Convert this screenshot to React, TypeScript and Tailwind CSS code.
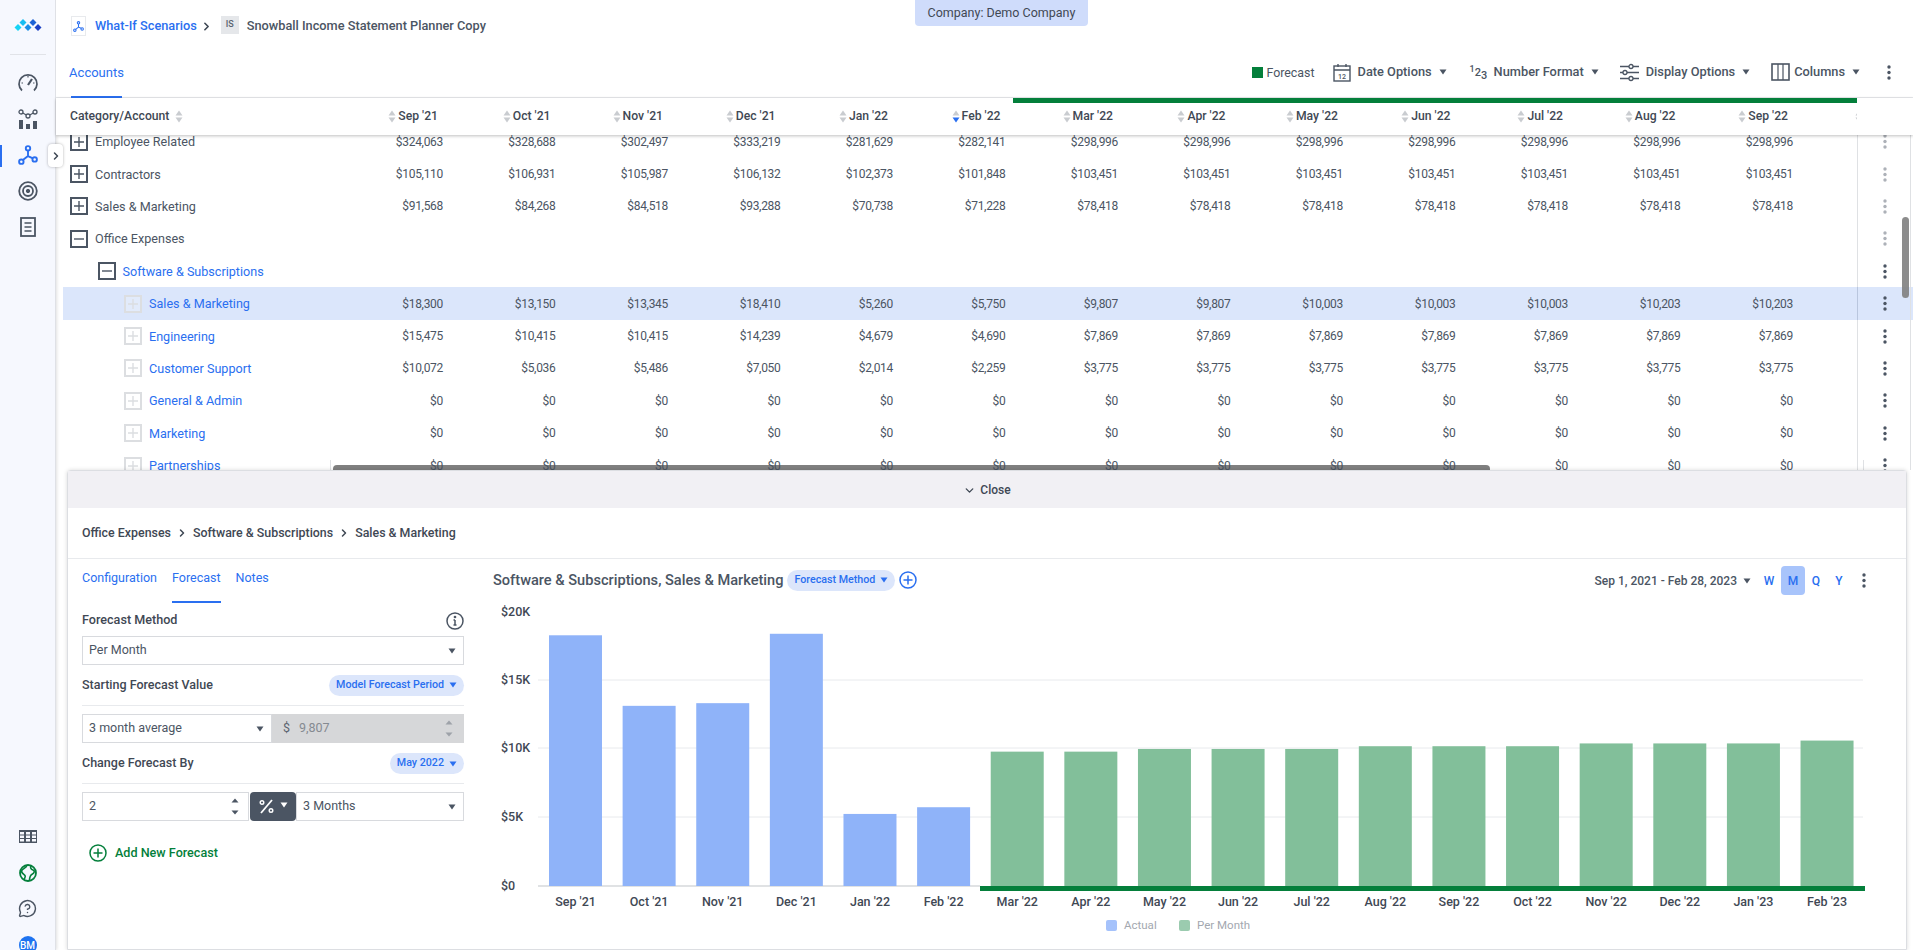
import { ChevronDown, ChevronRight, MessageCircleQuestion } from "lucide-react";

const MONTHS = ["Sep '21", "Oct '21", "Nov '21", "Dec '21", "Jan '22", "Feb '22", "Mar '22", "Apr '22", "May '22", "Jun '22", "Jul '22", "Aug '22", "Sep '22"];
const CHART_MONTHS = ["Sep '21", "Oct '21", "Nov '21", "Dec '21", "Jan '22", "Feb '22", "Mar '22", "Apr '22", "May '22", "Jun '22", "Jul '22", "Aug '22", "Sep '22", "Oct '22", "Nov '22", "Dec '22", "Jan '23", "Feb '23"];
const CHART_VALUES = [18300, 13150, 13345, 18410, 5260, 5750, 9807, 9807, 10003, 10003, 10003, 10203, 10203, 10203, 10407, 10407, 10407, 10615];

const flat = (v: number) => Array(7).fill(v);
const zero = Array(13).fill(0);

type Row = { name: string; level: number; box: "plus" | "minus" | "ghost"; link?: boolean; active?: boolean; faded?: boolean; values: number[] };

const ROWS: Row[] = [
  { name: "Employee Related", level: 0, box: "plus", faded: true, values: [324063, 328688, 302497, 333219, 281629, 282141, ...flat(298996)] },
  { name: "Contractors", level: 0, box: "plus", faded: true, values: [105110, 106931, 105987, 106132, 102373, 101848, ...flat(103451)] },
  { name: "Sales & Marketing", level: 0, box: "plus", faded: true, values: [91568, 84268, 84518, 93288, 70738, 71228, ...flat(78418)] },
  { name: "Office Expenses", level: 0, box: "minus", faded: true, values: [] },
  { name: "Software & Subscriptions", level: 1, box: "minus", link: true, values: [] },
  { name: "Sales & Marketing", level: 2, box: "ghost", link: true, active: true, values: [18300, 13150, 13345, 18410, 5260, 5750, 9807, 9807, 10003, 10003, 10003, 10203, 10203] },
  { name: "Engineering", level: 2, box: "ghost", link: true, values: [15475, 10415, 10415, 14239, 4679, 4690, ...flat(7869)] },
  { name: "Customer Support", level: 2, box: "ghost", link: true, values: [10072, 5036, 5486, 7050, 2014, 2259, ...flat(3775)] },
  { name: "General & Admin", level: 2, box: "ghost", link: true, values: zero },
  { name: "Marketing", level: 2, box: "ghost", link: true, values: zero },
  { name: "Partnerships", level: 2, box: "ghost", link: true, values: zero },
];

const money = (v: number) => "$" + v.toLocaleString("en-US");

function Caret({ className = "" }: { className?: string }) {
  return (
    <svg width="8" height="6" viewBox="0 0 8 6" className={className}>
      <path d="M0.5 0.5h7L4 5.5z" fill="currentColor" />
    </svg>
  );
}

function Spinner() {
  return (
    <svg width="8" height="17" viewBox="0 0 8 17" className="text-[#4b5563]">
      <path d="M0.5 4.5h7L4 0.5zM0.5 12.5h7L4 16.5z" fill="currentColor" />
    </svg>
  );
}

function SortIcon({ active }: { active?: boolean }) {
  return (
    <svg width="8" height="13" viewBox="0 0 8 13" className="shrink-0">
      <path d="M0.5 5.5h7L4 0.5z" fill="#c9ccd0" />
      <path d="M0.5 7.5h7L4 12.5z" fill={active ? "#2a6ff0" : "#c9ccd0"} />
    </svg>
  );
}

function Dots({ className = "" }: { className?: string }) {
  return (
    <svg width="4" height="15" viewBox="0 0 4 15" className={className}>
      <circle cx="2" cy="2" r="1.7" fill="currentColor" />
      <circle cx="2" cy="7.5" r="1.7" fill="currentColor" />
      <circle cx="2" cy="13" r="1.7" fill="currentColor" />
    </svg>
  );
}

function TreeBox({ kind }: { kind: Row["box"] }) {
  const ghost = kind === "ghost";
  const border = ghost ? "border-[#dcdee1]" : "border-[#4b5563]";
  const stroke = ghost ? "#dcdee1" : "#4b5563";
  return (
    <span className={`flex h-[18px] w-[18px] shrink-0 items-center justify-center border-2 bg-white/20 ${border}`}>
      <svg width="10" height="10" viewBox="0 0 10 10">
        <path d={kind === "minus" ? "M0 5h10" : "M0 5h10M5 0v10"} stroke={stroke} strokeWidth="1.4" />
      </svg>
    </span>
  );
}

function ScenarioIcon({ size = 18, color = "#2a6ff0" }: { size?: number; color?: string }) {
  return (
    <svg width={size} height={size} viewBox="0 0 18 18" fill="none" stroke={color} strokeWidth="1.7">
      <circle cx="9" cy="3" r="2" />
      <circle cx="3" cy="15" r="2" />
      <circle cx="15" cy="13" r="2" />
      <path d="M9 5v5l-4.6 3.6M9 10l4.4 2" />
    </svg>
  );
}

function Sidebar() {
  return (
    <aside className="relative flex w-[56px] shrink-0 flex-col items-center border-r border-[#dfe1e6] bg-[#f6f8fe] shadow-[1px_0_3px_rgba(0,0,0,0.12)]">
      <svg width="28" height="14" viewBox="0 0 28 14" className="mt-[19px]">
        <path d="M4 5l3.5 3.5L4 12 .5 8.5z" fill="#16d3f5" />
        <path d="M9 0l3.5 3.5L9 7 5.5 3.5z" fill="#17bdf2" />
        <path d="M14 5l3.5 3.5L14 12l-3.5-3.5z" fill="#1a8de6" />
        <path d="M19 0l3.5 3.5L19 7l-3.5-3.5z" fill="#1c63d6" />
        <path d="M24 5l3.5 3.5L24 12l-3.5-3.5z" fill="#1b40c4" />
      </svg>
      <div className="mt-[21px] h-px w-[36px] bg-[#e1e3e8]" />
      <div className="mt-[18px] flex flex-col items-center gap-[16px]">
        <svg width="20" height="20" viewBox="0 0 20 20" fill="none" stroke="#4b5563" strokeWidth="1.7">
          <path d="M4 17.5A9 9 0 1 1 16 17.5" />
          <path d="M10 12l4-6" strokeWidth="2.2" />
          <path d="M10 3v1.5M3.5 10H5M16.5 10H15" strokeWidth="1.2" />
        </svg>
        <svg width="20" height="20" viewBox="0 0 20 20" fill="none" stroke="#4b5563" strokeWidth="1.3">
          <circle cx="3" cy="3" r="2" />
          <circle cx="10" cy="7" r="2" />
          <circle cx="17" cy="3" r="2" />
          <path d="M4.8 4l3.5 2M11.8 6l3.5-2" />
          <path d="M1 11h4v9H1zM8 15h4v5H8zM15 12h4v8h-4z" fill="#4b5563" stroke="none" />
        </svg>
        <ScenarioIcon size={20} />
        <svg width="20" height="20" viewBox="0 0 20 20" fill="none" stroke="#4b5563">
          <circle cx="10" cy="10" r="8.8" strokeWidth="1.8" />
          <circle cx="10" cy="10" r="5" strokeWidth="1.8" />
          <circle cx="10" cy="10" r="1.7" fill="#4b5563" />
        </svg>
        <svg width="16" height="20" viewBox="0 0 16 20" fill="none" stroke="#4b5563" strokeWidth="1.6">
          <rect x="1" y="1" width="14" height="18" strokeWidth="1.8" />
          <path d="M4.5 6h7M4.5 10h7M4.5 14h7" />
        </svg>
      </div>
      <div className="absolute left-0 top-[145px] h-[22px] w-[2px] bg-[#2a6ff0]" />
      <button className="absolute left-[48px] top-[144px] z-30 flex h-[23px] w-[15px] items-center justify-center rounded-sm bg-white shadow-[0_0_3px_rgba(0,0,0,0.3)]">
        <ChevronRight size={12} strokeWidth={3} className="text-[#3f4854]" />
      </button>
      <div className="mt-auto -mb-[4px] flex flex-col items-center gap-[17px]">
        <svg width="18" height="13" viewBox="0 0 18 13" className="mb-[4px]">
          <rect width="18" height="13" fill="#4b5563" />
          <path d="M1 2h4v2.5H1zM7 2h4v2.5H7zM13 2h4v2.5h-4zM1 5.5h4V8H1zM7 5.5h4V8H7zM13 5.5h4V8h-4zM1 9h4v2.5H1zM7 9h4v2.5H7zM13 9h4v2.5h-4z" fill="#f6f8fe" />
        </svg>
        <svg width="18" height="18" viewBox="0 0 18 18" fill="none" stroke="#047f3b" strokeWidth="1.6">
          <circle cx="9" cy="9" r="8" strokeWidth="1.8" />
          <path d="M8 1.2c-.5 3-4 3-5.2 5.3S5 10 6 11.5s-.8 3-1 4.500" />
          <path d="M12 1.800c-1 2 0 3.500 2 4.200s1.500 3-.5 4-3 3-3 6.500" />
        </svg>
        <MessageCircleQuestion size={19} strokeWidth={1.8} className="mb-px text-[#4b5563]" />
        <div className="flex h-[18px] w-[18px] items-center justify-center rounded-full bg-[#1e73f0] text-[10px] font-medium text-white">BM</div>
      </div>
    </aside>
  );
}

function TopBar() {
  return (
    <div className="relative h-[98px] shrink-0 border-b border-[#e8eaed] bg-white">
      <div className="absolute left-[859px] top-0 flex h-[26px] w-[173px] items-center justify-center rounded-b-sm bg-[#cfdcfb] text-[12.5px] text-[#3f4854]">Company: Demo Company</div>
      <div className="flex h-[54px] items-start pl-[15px] pt-[16px]">
        <span className="flex h-[20px] w-[15px] items-center justify-center border border-[#e8eaed] bg-white">
          <ScenarioIcon size={11} />
        </span>
        <span className="ml-[9px] text-[12.75px] font-medium leading-[20px] text-[#2a6ff0]">What-If Scenarios</span>
        <ChevronRight size={13} strokeWidth={3} className="ml-[3px] mt-[4px] text-[#3f4854]" />
        <span className="ml-[8px] flex h-[18px] w-[18px] items-center justify-center bg-[#e5e7ea] text-[9px] font-medium text-[#5b6470]">IS</span>
        <span className="ml-[8px] text-[12.75px] font-medium leading-[20px] text-[#4b5563]">Snowball Income Statement Planner Copy</span>
      </div>
      <div className="flex h-[44px] items-start justify-between pl-[15px]">
        <div className="flex h-[44px] w-[51px] items-start justify-center border-b-2 border-[#2a6ff0] pt-[9px] text-[13px] text-[#2a6ff0]">Accounts</div>
        <div className="flex h-[36px] items-center pr-[22px] text-[12.8px] font-medium text-[#4b5563]">
          <span className="h-[11px] w-[11px] bg-[#047f3b]" />
          <span className="ml-[3px] mt-[3px] text-[12.4px] font-normal">Forecast</span>
          <svg width="18" height="19" viewBox="0 0 18 19" fill="none" stroke="#4b5563" strokeWidth="1.4" className="ml-[18px]">
            <rect x="1" y="3" width="16" height="15" />
            <path d="M1 7h16M5 1v3M13 1v3" />
            <text x="9" y="15.5" fontSize="7" textAnchor="middle" fill="#4b5563" stroke="none">12</text>
          </svg>
          <span className="ml-[7px]">Date Options</span>
          <Caret className="ml-[7px]" />
          <span className="ml-[23px] flex w-[18px] items-center text-[11px] leading-none">
            <span className="-mt-[6px] text-[9px]">1</span>
            <span>2</span>
            <span className="mt-[6px]">3</span>
          </span>
          <span className="ml-[6px]">Number Format</span>
          <Caret className="ml-[7px]" />
          <svg width="19" height="19" viewBox="0 0 19 19" fill="none" stroke="#4b5563" strokeWidth="1.3" className="ml-[21px]">
            <path d="M0 3.5h9M13 3.5h6M0 9.5h3M7 9.5h12M0 15.5h9M13 15.5h6" />
            <circle cx="11" cy="3.5" r="2" />
            <circle cx="5" cy="9.5" r="2" />
            <circle cx="11" cy="15.5" r="2" />
          </svg>
          <span className="ml-[7px]">Display Options</span>
          <Caret className="ml-[7px]" />
          <svg width="19" height="18" viewBox="0 0 19 18" fill="none" stroke="#4b5563" strokeWidth="1.6" className="ml-[21px]">
            <rect x="1" y="1" width="17" height="16" />
            <path d="M7 1v16M12 1v16" strokeWidth="1.2" />
          </svg>
          <span className="ml-[4px]">Columns</span>
          <Caret className="ml-[7px]" />
          <Dots className="ml-[27px]" />
        </div>
      </div>
    </div>
  );
}

function TableHeader() {
  return (
    <div className="relative z-20 flex h-[37px] shrink-0 bg-white pl-[7px] shadow-[0_1px_3px_rgba(0,0,0,0.25)]">
      <div className="flex w-[267.5px] items-center gap-[6px] pl-[7px] text-[12.2px] font-medium text-[#3f4854]">
        Category/Account <SortIcon />
      </div>
      <div className="relative flex w-[1526.5px] shrink-0 overflow-hidden">
        <div className="absolute right-0 top-0 h-[5px] w-[844.5px] bg-[#047f3b]" />
        {MONTHS.map((m) => (
          <div key={m} className="flex w-[112.5px] shrink-0 items-center justify-end gap-[2px] pr-[5px] text-[12.2px] font-medium text-[#3f4854]">
            <SortIcon active={m === "Feb '22"} />
            {m}
          </div>
        ))}
        <div className="flex w-[64px] shrink-0 items-center pl-[62px]">
          <SortIcon />
        </div>
      </div>
    </div>
  );
}

function TableRow({ row }: { row: Row }) {
  const indent = row.level === 0 ? "pl-[7px]" : row.level === 1 ? "pl-[34.5px]" : "pl-[61px]";
  return (
    <div className="flex h-[32.4px] pl-[7px]">
      <div className={`flex min-w-0 flex-1 ${row.active ? "bg-[#dbe6fb]" : ""}`}>
        <div className={`flex w-[267.5px] shrink-0 items-center gap-[7px] ${indent}`}>
          <TreeBox kind={row.box} />
          <span className={`pt-[2px] text-[12.6px] ${row.link ? "text-[#2a6ff0]" : "text-[#4b5563]"}`}>{row.name}</span>
        </div>
        {MONTHS.map((m, i) => (
          <div key={m} className="flex w-[112.5px] shrink-0 items-center justify-end text-[12px] tracking-[-0.3px] text-[#4b5563]">
            {row.values[i] !== undefined ? money(row.values[i]) : ""}
          </div>
        ))}
        <div className="w-[64px] shrink-0" />
        <div className={`flex w-[53px] shrink-0 items-center border-l pl-[25px] ${row.active ? "border-[#b9c6de]" : "border-[#dfe1e4]"}`}>
          <Dots className={row.faded ? "text-[#adb1b8]" : "text-[#4b5563]"} />
        </div>
      </div>
    </div>
  );
}

function Pill({ label }: { label: string }) {
  return (
    <span className="flex h-[21px] items-center gap-[5px] rounded-full bg-[#dce6fb] px-[7px] text-[10.7px] font-medium text-[#2a6ff0]">
      {label}
      <Caret className="text-[#2a6ff0]" />
    </span>
  );
}

function SelectBox({ label, className }: { label: string; className: string }) {
  return (
    <div className={`flex h-[29px] items-center justify-between border border-[#d8dade] bg-white pl-[6px] pr-[7px] text-[12.5px] text-[#4b5563] ${className}`}>
      {label}
      <Caret className="text-[#4b5563]" />
    </div>
  );
}

function ForecastForm() {
  return (
    <div className="w-[412px] shrink-0 pl-[14px] pr-[16px]">
      <div className="flex h-[44px] gap-[15px] text-[12.5px] text-[#2a6ff0]">
        <span className="pt-[10px]">Configuration</span>
        <span className="border-b-2 border-[#2a6ff0] pt-[10px]">Forecast</span>
        <span className="pt-[10px]">Notes</span>
      </div>
      <div className="flex h-[33px] items-center justify-between pt-[2px]">
        <span className="text-[12.6px] font-medium text-[#3f4854]">Forecast Method</span>
        <svg width="18" height="18" viewBox="0 0 18 18" fill="none" stroke="#4b5563" strokeWidth="1.5">
          <circle cx="9" cy="9" r="8" />
          <path d="M9 8v5M7.5 13h3M7.5 8H9" />
          <circle cx="9" cy="5" r="0.6" />
        </svg>
      </div>
      <SelectBox label="Per Month" className="w-full" />
      <div className="flex h-[41px] items-center justify-between border-b border-[#e8eaed]">
        <span className="text-[12.5px] font-medium text-[#3f4854]">Starting Forecast Value</span>
        <Pill label="Model Forecast Period" />
      </div>
      <div className="mt-[8px] flex">
        <SelectBox label="3 month average" className="w-[190px]" />
        <div className="flex h-[29px] flex-1 items-center justify-between bg-[#d6d7d9] pl-[11px] pr-[11px] text-[12.5px] text-[#858a91]">
          <span className="flex gap-[9px]"><span className="text-[#5b6470]">$</span>9,807</span>
          <span className="opacity-40"><Spinner /></span>
        </div>
      </div>
      <div className="flex h-[41px] items-center justify-between border-b border-[#e8eaed] pt-px">
        <span className="text-[12.5px] font-medium text-[#3f4854]">Change Forecast By</span>
        <Pill label="May 2022" />
      </div>
      <div className="mt-[8px] flex">
        <div className="flex h-[29px] w-[167px] items-center justify-between border border-[#d8dade] pl-[6px] pr-[9px] text-[12.5px] text-[#4b5563]">
          2
          <Spinner />
        </div>
        <div className="ml-px flex h-[29px] w-[46px] items-center justify-center gap-[6px] rounded-sm bg-[#4b5563]">
          <svg width="15" height="15" viewBox="0 0 15 15" fill="none" stroke="white" strokeWidth="1.4">
            <path d="M13 1L2 14" strokeWidth="1.8" />
            <circle cx="3" cy="3.5" r="1.8" />
            <circle cx="12" cy="11.5" r="1.8" />
          </svg>
          <Caret className="-mt-[3px] text-white" />
        </div>
        <SelectBox label="3 Months" className="flex-1" />
      </div>
      <div className="ml-[7px] mt-[23px] flex items-center gap-[8px] text-[12.6px] font-medium text-[#047f3b]">
        <svg width="18" height="18" viewBox="0 0 18 18" fill="none" stroke="#047f3b" strokeWidth="1.5">
          <circle cx="9" cy="9" r="8" />
          <path d="M9 4.5v9M4.5 9h9" />
        </svg>
        Add New Forecast
      </div>
    </div>
  );
}

function BarChart() {
  // origin of the drawing is page x 480, y 600
  const scale = 68.5 / 5000;
  const baseline = 286;
  const sans = { fontFamily: "Roboto, sans-serif" };
  return (
    <svg width="1426" height="350" viewBox="0 0 1426 350" style={sans}>
      {[80, 148, 217].map((y) => (
        <line key={y} x1="58" x2="1383" y1={y} y2={y} stroke="#e8eaed" />
      ))}
      <line x1="58" x2="500" y1={baseline} y2={baseline} stroke="#d6d8db" strokeWidth="1.5" />
      {[["$20K", 12], ["$15K", 80], ["$10K", 148], ["$5K", 217], ["$0", 286]].map(([label, y]) => (
        <text key={label} x="21" y={Number(y) + 4} fontSize="12.5" fontWeight="500" fill="#3f4854">{label}</text>
      ))}
      {CHART_VALUES.map((v, i) => {
        const x = 69 + i * 73.62;
        const h = v * scale;
        return <rect key={i} x={x} y={baseline - h} width="53" height={h} fill={i < 6 ? "#8fb3f9" : "#82bf9a"} />;
      })}
      <rect x="500" y={baseline} width="885" height="5" fill="#047f3b" />
      {CHART_MONTHS.map((m, i) => (
        <text key={i} x={95.5 + i * 73.62} y="306" fontSize="12.5" fontWeight="500" textAnchor="middle" fill="#3f4854">{m}</text>
      ))}
      <rect x="626" y="320" width="11" height="11" rx="2" fill="#a5c2fb" />
      <text x="644" y="329" fontSize="11.5" fill="#a3a8b0">Actual</text>
      <rect x="699" y="320" width="11" height="11" rx="2" fill="#9bcbaf" />
      <text x="717" y="329" fontSize="11.5" fill="#a3a8b0">Per Month</text>
    </svg>
  );
}

function DetailPanel() {
  return (
    <section className="relative z-10 ml-[11px] mr-[6px] flex min-h-0 flex-1 flex-col rounded-t-sm border border-[#dcdee2] bg-white shadow-[0_0_4px_rgba(0,0,0,0.15)]">
      <div className="flex h-[37px] shrink-0 items-center justify-center gap-[4px] bg-[#f1f0f4] pt-px text-[12px] font-medium text-[#3f4854]">
        <ChevronDown size={13} strokeWidth={2.5} />
        Close
      </div>
      <div className="flex h-[51px] shrink-0 items-center gap-[5px] border-b border-[#e8eaed] pl-[14px] text-[12.4px] font-medium text-[#3f4854]">
        Office Expenses
        <ChevronRight size={12} strokeWidth={3} />
        Software & Subscriptions
        <ChevronRight size={12} strokeWidth={3} />
        Sales & Marketing
      </div>
      <div className="flex min-h-0 flex-1">
        <ForecastForm />
        <div className="relative min-w-0 flex-1">
          <div className="flex h-[41px] items-center justify-between pl-[13px] pr-[40px] pt-[2px]">
            <div className="flex items-center gap-[4px]">
              <span className="text-[14.6px] font-medium text-[#4b5563]">Software & Subscriptions, Sales & Marketing</span>
              <Pill label="Forecast Method" />
              <svg width="18" height="18" viewBox="0 0 18 18" fill="none" stroke="#2a6ff0" strokeWidth="1.5">
                <circle cx="9" cy="9" r="8" />
                <path d="M9 4.5v9M4.5 9h9" />
              </svg>
            </div>
            <div className="flex items-center text-[12px] font-medium text-[#2a6ff0]">
              <span className="text-[#4b5563]">Sep 1, 2021 - Feb 28, 2023</span>
              <Caret className="ml-[6px] text-[#4b5563]" />
              <span className="ml-[6px] flex h-[29px] w-[24px] items-center justify-center">W</span>
              <span className="flex h-[29px] w-[24px] items-center justify-center rounded-sm bg-[#a8c4fb]">M</span>
              <span className="flex h-[29px] w-[22px] items-center justify-center">Q</span>
              <span className="flex h-[29px] w-[24px] items-center justify-center">Y</span>
              <Dots className="ml-[11px] text-[#4b5563]" />
            </div>
          </div>
          <BarChart />
        </div>
      </div>
    </section>
  );
}

export default function App() {
  return (
    <div className="flex h-screen w-screen overflow-hidden bg-white font-['Roboto',sans-serif]">
      <Sidebar />
      <main className="relative flex min-w-0 flex-1 flex-col">
        <TopBar />
        <TableHeader />
        <div className="relative h-[335px] shrink-0 overflow-hidden">
          <div className="absolute bottom-0 left-[274px] h-[10px] w-[1534px] border-x border-[#dfe1e4]">
            <div className="absolute bottom-0 left-[2px] h-[5px] w-[1157px] rounded-t-sm bg-[#808080]" />
          </div>
          <div className="relative -mt-[9.5px]">
            {ROWS.map((row, i) => (
              <TableRow key={i} row={row} />
            ))}
          </div>
          <div className="absolute right-[2px] top-0 h-full w-px bg-[#dfe1e4]" />
          <div className="absolute right-[4.5px] top-[82px] h-[81px] w-[7px] rounded-full bg-[#808080]/90" />
        </div>
        <DetailPanel />
      </main>
    </div>
  );
}
